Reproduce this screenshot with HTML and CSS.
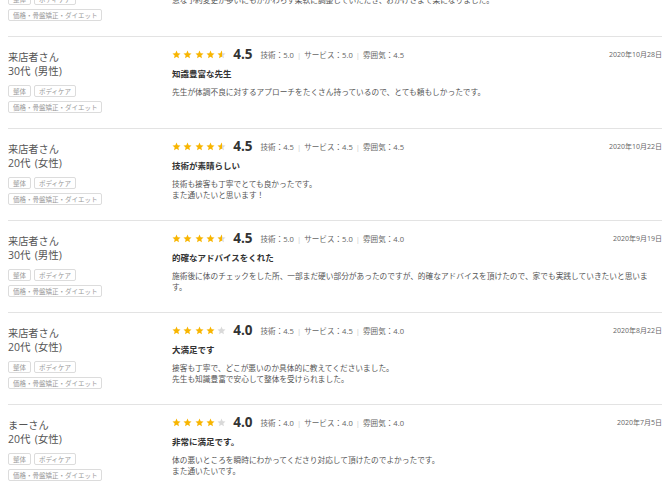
FILE: index.html
```html
<!DOCTYPE html>
<html lang="ja">
<head>
<meta charset="utf-8">
<title>口コミ</title>
<link rel="stylesheet" href="styles.css">
</head>
<body>
<svg width="0" height="0" class="defs" aria-hidden="true">
  <defs>
    <symbol id="star" viewBox="0 0 24 24"><path d="M12 1.5l3.1 7.1 7.6.7-5.8 5.1 1.7 7.6L12 18.1l-6.6 3.9 1.7-7.6-5.8-5.1 7.6-.7z"/></symbol>
    <linearGradient id="half"><stop offset="50%" stop-color="#f8b500"/><stop offset="50%" stop-color="#d9d9d9"/></linearGradient>
  </defs>
</svg>
<div class="list">
  <div class="review">
    <div class="who">
      <div class="name">来店者さん</div>
      <div class="age">40代 (女性)</div>
      <div class="tags"><span class="tag">整体</span><span class="tag">ボディケア</span><span class="tag">価格・骨盤矯正・ダイエット</span></div>
    </div>
    <div class="body">
      <div class="rating">
        <span class="stars"><svg class="s on"><use href="#star"/></svg><svg class="s on"><use href="#star"/></svg><svg class="s on"><use href="#star"/></svg><svg class="s on"><use href="#star"/></svg><svg class="s on"><use href="#star"/></svg></span>
        <span class="score">5.0</span>
        <span class="detail">技術：5.0<i>|</i>サービス：5.0<i>|</i>雰囲気：5.0</span>
        <span class="date">2020年11月3日</span>
      </div>
      <div class="title">丁寧な対応でした</div>
      <p class="text">急な予約変更が多いにもかかわらず柔軟に調整していただき、おかげさまで楽になりました。</p>
    </div>
  </div>

  <div class="review">
    <div class="who">
      <div class="name">来店者さん</div>
      <div class="age">30代 (男性)</div>
      <div class="tags"><span class="tag">整体</span><span class="tag">ボディケア</span><span class="tag">価格・骨盤矯正・ダイエット</span></div>
    </div>
    <div class="body">
      <div class="rating">
        <span class="stars"><svg class="s on"><use href="#star"/></svg><svg class="s on"><use href="#star"/></svg><svg class="s on"><use href="#star"/></svg><svg class="s on"><use href="#star"/></svg><svg class="s half"><use href="#star"/></svg></span>
        <span class="score">4.5</span>
        <span class="detail">技術：5.0<i>|</i>サービス：5.0<i>|</i>雰囲気：4.5</span>
        <span class="date">2020年10月28日</span>
      </div>
      <div class="title">知識豊富な先生</div>
      <p class="text">先生が体調不良に対するアプローチをたくさん持っているので、とても頼もしかったです。</p>
    </div>
  </div>

  <div class="review">
    <div class="who">
      <div class="name">来店者さん</div>
      <div class="age">20代 (女性)</div>
      <div class="tags"><span class="tag">整体</span><span class="tag">ボディケア</span><span class="tag">価格・骨盤矯正・ダイエット</span></div>
    </div>
    <div class="body">
      <div class="rating">
        <span class="stars"><svg class="s on"><use href="#star"/></svg><svg class="s on"><use href="#star"/></svg><svg class="s on"><use href="#star"/></svg><svg class="s on"><use href="#star"/></svg><svg class="s half"><use href="#star"/></svg></span>
        <span class="score">4.5</span>
        <span class="detail">技術：4.5<i>|</i>サービス：4.5<i>|</i>雰囲気：4.5</span>
        <span class="date">2020年10月22日</span>
      </div>
      <div class="title">技術が素晴らしい</div>
      <p class="text">技術も接客も丁寧でとても良かったです。<br>また通いたいと思います！</p>
    </div>
  </div>

  <div class="review">
    <div class="who">
      <div class="name">来店者さん</div>
      <div class="age">30代 (男性)</div>
      <div class="tags"><span class="tag">整体</span><span class="tag">ボディケア</span><span class="tag">価格・骨盤矯正・ダイエット</span></div>
    </div>
    <div class="body">
      <div class="rating">
        <span class="stars"><svg class="s on"><use href="#star"/></svg><svg class="s on"><use href="#star"/></svg><svg class="s on"><use href="#star"/></svg><svg class="s on"><use href="#star"/></svg><svg class="s half"><use href="#star"/></svg></span>
        <span class="score">4.5</span>
        <span class="detail">技術：5.0<i>|</i>サービス：5.0<i>|</i>雰囲気：4.0</span>
        <span class="date">2020年9月19日</span>
      </div>
      <div class="title">的確なアドバイスをくれた</div>
      <p class="text">施術後に体のチェックをした所、一部まだ硬い部分があったのですが、的確なアドバイスを頂けたので、家でも実践していきたいと思います。</p>
    </div>
  </div>

  <div class="review">
    <div class="who">
      <div class="name">来店者さん</div>
      <div class="age">20代 (女性)</div>
      <div class="tags"><span class="tag">整体</span><span class="tag">ボディケア</span><span class="tag">価格・骨盤矯正・ダイエット</span></div>
    </div>
    <div class="body">
      <div class="rating">
        <span class="stars"><svg class="s on"><use href="#star"/></svg><svg class="s on"><use href="#star"/></svg><svg class="s on"><use href="#star"/></svg><svg class="s on"><use href="#star"/></svg><svg class="s off"><use href="#star"/></svg></span>
        <span class="score">4.0</span>
        <span class="detail">技術：4.5<i>|</i>サービス：4.5<i>|</i>雰囲気：4.0</span>
        <span class="date">2020年8月22日</span>
      </div>
      <div class="title">大満足です</div>
      <p class="text">接客も丁寧で、どこが悪いのか具体的に教えてくださいました。<br>先生も知識豊富で安心して整体を受けられました。</p>
    </div>
  </div>

  <div class="review">
    <div class="who">
      <div class="name">まーさん</div>
      <div class="age">20代 (女性)</div>
      <div class="tags"><span class="tag">整体</span><span class="tag">ボディケア</span><span class="tag">価格・骨盤矯正・ダイエット</span></div>
    </div>
    <div class="body">
      <div class="rating">
        <span class="stars"><svg class="s on"><use href="#star"/></svg><svg class="s on"><use href="#star"/></svg><svg class="s on"><use href="#star"/></svg><svg class="s on"><use href="#star"/></svg><svg class="s off"><use href="#star"/></svg></span>
        <span class="score">4.0</span>
        <span class="detail">技術：4.0<i>|</i>サービス：4.0<i>|</i>雰囲気：4.0</span>
        <span class="date">2020年7月5日</span>
      </div>
      <div class="title">非常に満足です。</div>
      <p class="text">体の悪いところを瞬時にわかってくださり対応して頂けたのでよかったです。<br>また通いたいです。</p>
    </div>
  </div>
</div>
</body>
</html>
```
FILE: styles.css
```css
html, body {
  margin: 0;
  padding: 0;
  background: #fff;
  overflow: hidden;
}
body {
  font-family: "Noto Sans CJK JP", "Open Sans", sans-serif;
  color: #555;
}
.defs {
  position: absolute;
  width: 0;
  height: 0;
}
.list {
  margin: -56px 8px 0 8px;
}
.review {
  display: flex;
  border-top: 1px solid #e3e3e3;
  padding: 12px 0 14px;
  height: 65px;
}
.review:first-child {
  border-top-color: transparent;
}
.who {
  width: 164px;
  flex: none;
}
.name, .age {
  font-size: 10.2px;
  line-height: 15px;
  color: #555;
}
.age {
  font-family: "Open Sans", "Noto Sans CJK JP", sans-serif;
  font-size: 10.5px;
  word-spacing: 1.5px;
}
.tags {
  margin-top: 6px;
  display: flex;
  flex-wrap: wrap;
  gap: 4px 3px;
  width: 110px;
}
.tag {
  display: inline-block;
  font-size: 6.5px;
  line-height: 10px;
  height: 10px;
  padding: 0 4px;
  border: 1px solid #dcdcdc;
  border-radius: 2px;
  color: #9a9a9a;
}
.body {
  flex: 1;
  min-width: 0;
}
.rating {
  display: flex;
  align-items: center;
  height: 10px;
}
.stars {
  display: flex;
  gap: 2.3px;
}
.s {
  width: 9px;
  height: 9px;
}
.s.on { fill: #f8b500; }
.s.off { fill: #d9d9d9; }
.s.half { fill: url(#half); }
.score {
  font-family: "Open Sans", sans-serif;
  font-weight: 700;
  font-size: 13.5px;
  color: #333;
  margin-left: 7px;
  line-height: 10px;
}
.detail {
  font-family: "Open Sans", "Noto Sans CJK JP", sans-serif;
  font-size: 7.6px;
  color: #666;
  margin-left: 8px;
}
.detail i {
  font-style: normal;
  color: #ccc;
  margin: 0 3px;
}
.date {
  margin-left: auto;
  font-family: "Open Sans", "Noto Sans CJK JP", sans-serif;
  font-size: 7px;
  color: #666;
}
.title {
  margin-top: 8px;
  font-size: 8.5px;
  line-height: 12px;
  font-weight: 700;
  color: #333;
}
.text {
  margin: 6.5px 0 0;
  font-size: 7.7px;
  line-height: 11px;
  color: #555;
}
```
